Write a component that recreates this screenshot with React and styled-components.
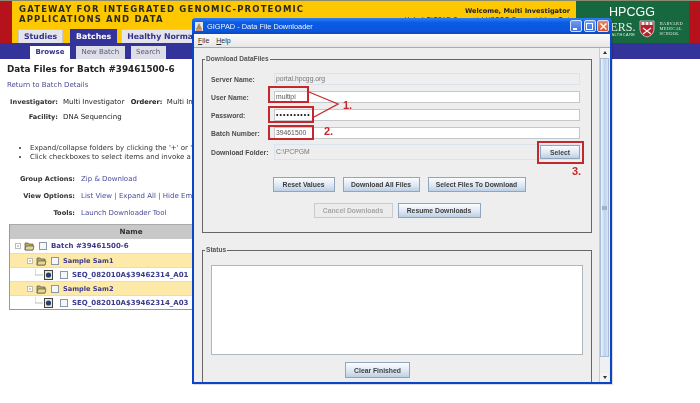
import React from 'react'
import styled, { createGlobalStyle } from 'styled-components'

const GlobalStyle = createGlobalStyle`
  html, body { margin: 0; padding: 0; background: #fff; }
  body { width: 700px; height: 403px; overflow: hidden; font-family: "DejaVu Sans", Verdana, sans-serif; color: #222; }
  #root { filter: blur(0.35px); }
`

const Page = styled.div`
  position: relative;
  width: 700px;
  height: 403px;
  overflow: hidden;
`

const Header = styled.header`
  display: flex;
  height: 43px;
  border-top: 1px solid #8a8a70;
  box-sizing: border-box;
`
const RedBar = styled.div`
  width: ${p => p.$w}px;
  background: #b5121b;
`
const Banner = styled.div`
  flex: 1;
  position: relative;
  background: #fdc800;
  display: flex;
  flex-direction: column;
  justify-content: space-between;
  padding: 3px 0 0 6px;
  overflow: hidden;
`
const BannerTitle = styled.div`
  margin-left: 1px;
  font-size: 8.5px;
  font-weight: bold;
  letter-spacing: 1.15px;
  line-height: 10px;
  color: #2a2a20;
  white-space: nowrap;
`
const Welcome = styled.div`
  position: absolute;
  right: 6px;
  top: 6px;
  font-size: 6.6px;
  line-height: 9px;
  text-align: right;
  color: #222;
  white-space: nowrap;
  b { display: block; font-size: 6.6px; }
`
const Tabs = styled.div`
  display: flex;
  gap: 4px;
`
const Tab = styled.div`
  height: 14px;
  padding: 0 5px;
  margin-right: ${p => p.$after || 0}px;
  font-size: 7.8px;
  font-weight: bold;
  line-height: 14px;
  color: ${p => (p.$active ? '#fff' : '#33338f')};
  background: ${p => (p.$active ? '#333399' : '#e4e4ea')};
  border: 1px solid #c9c9c9;
  border-bottom: 0;
  border-color: ${p => (p.$active ? '#333399' : '#c9c9c9')};
  box-sizing: border-box;
  white-space: nowrap;
`
const Partner = styled.div`
  width: 113px;
  background: #17683f;
  color: #fff;
  display: flex;
  flex-direction: column;
  align-items: center;
  overflow: hidden;
`
const PartnerName = styled.div`
  font-family: "Liberation Sans", Arial, sans-serif;
  font-size: 12.5px;
  line-height: 14px;
  margin-top: 4px;
  margin-left: -1px;
`
const PartnerRow = styled.div`
  display: flex;
  align-items: center;
  justify-content: flex-end;
  gap: 4px;
  width: 100%;
  padding-right: 6px;
  box-sizing: border-box;
  margin-top: 0;
`
const PartnerWord = styled.div`
  font-family: "Liberation Serif", serif;
  font-size: 12px;
  line-height: 11px;
  margin-top: 3px;
  text-align: right;
  white-space: nowrap;
  color: #e6efe9;
  small { display: block; font-family: "Liberation Sans", sans-serif; font-size: 3.8px; line-height: 5px; letter-spacing: 0.5px; }
`
const Harvard = styled.div`
  font-family: "Liberation Serif", serif;
  font-size: 4.4px;
  line-height: 5px;
  letter-spacing: 0.4px;
  color: #e6efe9;
`

const NavBar = styled.nav`
  display: flex;
  height: 16px;
  background: #333399;
  padding: 3px 0 0 30px;
  box-sizing: border-box;
  gap: 6px;
`
const SubTab = styled.div`
  height: 13px;
  padding: 0 5.5px;
  font-size: 7px;
  line-height: 13px;
  font-weight: ${p => (p.$active ? 'bold' : 'normal')};
  color: ${p => (p.$active ? '#33338a' : '#555580')};
  background: ${p => (p.$active ? '#fff' : '#dedee6')};
`

const Main = styled.main`
  padding: 4px 0 0 7px;
`
const Heading = styled.h1`
  margin: 0;
  font-size: 8.8px;
  line-height: 12px;
  font-weight: bold;
  color: #222;
  white-space: nowrap;
`
const BackLink = styled.div`
  margin-top: 5px;
  font-size: 7px;
  line-height: 10px;
  color: #4a4a9a;
`
const MetaTable = styled.div`
  display: grid;
  grid-template-columns: 51px 1fr;
  column-gap: 5px;
  row-gap: 5px;
  margin-top: 7px;
  font-size: 7px;
  line-height: 10px;
  white-space: nowrap;
  b { font-size: 6.6px; margin-left: 2px; }
`
const MetaLabel = styled.div`
  font-size: 6.6px;
  font-weight: bold;
  text-align: right;
  color: #333;
`
const Bullets = styled.ul`
  margin: 22px 0 0 0;
  padding: 0 0 0 23px;
  font-size: 7px;
  line-height: 9px;
  white-space: nowrap;
  color: #333;
`
const Actions = styled.div`
  display: grid;
  grid-template-columns: 68px 1fr;
  column-gap: 6px;
  row-gap: 7px;
  margin-top: 12px;
  font-size: 7px;
  line-height: 10px;
  white-space: nowrap;
`
const ActionLink = styled.div`
  color: #4a4a9a;
`

const TreeTable = styled.div`
  margin: 6px 0 0 2px;
  width: 500px;
  border: 1px solid #999;
  border-top-color: #aaa;
  box-sizing: border-box;
`
const TreeHead = styled.div`
  height: 14px;
  background: #c8c8c8;
  text-align: center;
  font-size: 7.2px;
  font-weight: bold;
  line-height: 13px;
  padding-right: 256px;
  color: #333;
`
const TreeRow = styled.div`
  display: flex;
  align-items: center;
  height: 14px;
  padding-left: ${p => p.$indent}px;
  background: ${p => (p.$band ? '#fde9a8' : '#fff')};
  border-top: ${p => (p.$line ? '1px solid #dcdcdc' : '0')};
  box-sizing: border-box;
  font-size: ${p => (p.$band ? 6.6 : 7)}px;
  font-weight: bold;
  color: #3b3b8e;
  white-space: nowrap;
`
const CheckBox = styled.span`
  width: 6px;
  height: 6px;
  border: 1px solid #8b97a5;
  background: #f4f6f8;
  margin: 0 4px 0 ${p => p.$gap}px;
  flex: none;
`

const FolderIcon = () => (
  <svg width="20" height="10" viewBox="0 0 20 10">
    <rect x="0.5" y="2.5" width="5" height="5" fill="#fff" stroke="#bbb" />
    <path d="M2 5h2" stroke="#999" />
    <path d="M10 2h3l1 1h4v6h-8z" fill="#b8a860" stroke="#555" strokeWidth="0.7" />
    <path d="M11 5h8l-1 4h-8z" fill="#e6d88a" stroke="#444" strokeWidth="0.6" />
  </svg>
)
const FileIcon = () => (
  <svg width="18" height="12" viewBox="0 0 18 12" style={{ flex: 'none' }}>
    <path d="M0 0v6h8" fill="none" stroke="#bbb" />
    <rect x="9.5" y="1.5" width="8" height="9" fill="#eee9c8" stroke="#444" />
    <circle cx="13.5" cy="6" r="2.6" fill="#1e3f7a" />
  </svg>
)

const Window = styled.section`
  position: absolute;
  left: 192px;
  top: 18px;
  width: 420px;
  height: 366px;
  box-sizing: border-box;
  border: 2px solid #0b44c8;
  border-top: 0;
  border-radius: 4px 4px 0 0;
  background: #eeeeee;
  display: flex;
  flex-direction: column;
  box-shadow: 1px 1px 1px rgba(0,0,0,0.15);
`
const TitleBar = styled.div`
  display: flex;
  align-items: center;
  height: 16px;
  margin: 0 -2px;
  padding: 0 3px 0 3px;
  flex: none;
  background: linear-gradient(#2f7df2, #0a5be4 30%, #0a56dc 80%, #0a48c0);
  border-radius: 4px 4px 0 0;
  color: #eef2fb;
  font-family: "Liberation Sans", Arial, sans-serif;
  font-size: 7.4px;
`
const AppIcon = styled.svg`
  margin-right: 4px;
  flex: none;
`
const TitleText = styled.div`
  flex: 1;
`
const WinButton = styled.div`
  width: 12px;
  height: 12px;
  box-sizing: border-box;
  margin-left: 1.5px;
  border: 1px solid #d6e2fa;
  border-radius: 2px;
  background: ${p => (p.$close ? 'linear-gradient(#ec8a6c,#d5502c)' : 'linear-gradient(#6f9bf2,#3c70e0)')};
  display: flex;
  align-items: center;
  justify-content: center;
`
const MenuBar = styled.div`
  display: flex;
  gap: 7px;
  height: 13px;
  flex: none;
  align-items: center;
  padding-left: 4px;
  background: linear-gradient(#fbfbfb, #e6e6e6);
  border-bottom: 1px solid #aaa;
  font-family: "Liberation Sans", Arial, sans-serif;
  font-size: 7px;
  color: #333;
  u { text-decoration: underline; }
`
const WinBody = styled.div`
  flex: 1;
  display: flex;
  min-height: 0;
`
const Content = styled.div`
  flex: 1;
  padding: 7px 7px 0 8px;
  display: flex;
  flex-direction: column;
  gap: 13px;
  min-width: 0;
  overflow: hidden;
`
const Group = styled.fieldset`
  margin: 0;
  padding: 0;
  border: 1px solid #666;
  border-radius: 0;
  height: ${p => p.$h}px;
  box-sizing: border-box;
  flex: none;
  min-width: 0;
  display: flex;
  flex-direction: column;
  font-family: "Liberation Sans", Arial, sans-serif;
`
const Legend = styled.legend`
  margin-left: 2px;
  padding: 0 1px;
  font-size: 6.6px;
  line-height: 8px;
  font-weight: bold;
  color: #555;
`
const FormGrid = styled.div`
  display: grid;
  grid-template-columns: 56px 1fr;
  column-gap: 7px;
  grid-auto-rows: 12px;
  row-gap: 6px;
  padding: 10px 11px 0 8px;
  align-items: center;
`
const FieldLabel = styled.div`
  font-size: 6.8px;
  font-weight: bold;
  color: #4c4c4c;
  white-space: nowrap;
`
const Field = styled.div`
  height: ${p => (p.$tall ? 16 : 12)}px;
  box-sizing: border-box;
  border: 1px solid ${p => (p.$readonly ? '#dbe3ec' : '#c4c8cc')};
  background: ${p => (p.$readonly ? '#eeeeee' : '#fff')};
  font-size: 6.8px;
  line-height: 10px;
  padding-left: 1px;
  color: ${p => (p.$readonly ? '#777' : '#555')};
  ${p => p.$strong && 'color:#111; font-weight:bold; letter-spacing:1.1px;'}
`
const FolderRow = styled.div`
  grid-column: 1 / -1;
  display: grid;
  grid-template-columns: 56px 1fr;
  column-gap: 7px;
  align-items: center;
  margin-top: 2px;
  height: 16px;
`
const FolderField = styled(Field)`
  display: flex;
  justify-content: space-between;
  align-items: center;
  padding-right: 0;
  border-right: 0;
  line-height: 14px;
`
const JavaButton = styled.button`
  height: ${p => p.$h}px;
  width: ${p => p.$w}px;
  box-sizing: border-box;
  margin: 0;
  padding: 0;
  border: 1px solid ${p => (p.disabled ? '#c8ccd0' : '#8fa6bd')};
  border-radius: 0;
  background: ${p => (p.disabled ? '#ececec' : 'linear-gradient(#fbfcfe, #dbe6f2 60%, #bccfe4)')};
  font-family: "Liberation Sans", Arial, sans-serif;
  font-size: 6.8px;
  font-weight: bold;
  color: ${p => (p.disabled ? '#a6a6a6' : '#3c3c3c')};
  white-space: nowrap;
`
const ButtonRow = styled.div`
  display: flex;
  justify-content: center;
  gap: ${p => p.$gap}px;
  margin-top: ${p => p.$top}px;
  margin-left: ${p => p.$shift}px;
`
const StatusArea = styled.div`
  margin: 11px 8px 0 8px;
  height: 90px;
  box-sizing: border-box;
  flex: none;
  background: #fff;
  border: 1px solid #aeb6be;
`
const ScrollBar = styled.div`
  width: 9px;
  flex: none;
  margin-right: 1px;
  display: flex;
  flex-direction: column;
  background: #eef0f2;
  border-left: 1px solid #c8ccd2;
`
const ScrollArrow = styled.div`
  height: 9px;
  flex: none;
  display: flex;
  align-items: center;
  justify-content: center;
  background: #f4f4f4;
  &::before {
    content: '';
    border-left: 2.5px solid transparent;
    border-right: 2.5px solid transparent;
    ${p => (p.$down ? 'border-top: 3px solid #333;' : 'border-bottom: 3px solid #333;')}
  }
`
const ScrollThumb = styled.div`
  flex: none;
  height: 299px;
  margin-top: 1px;
  box-sizing: border-box;
  border: 1px solid #a6bcd8;
  background: linear-gradient(90deg, #eef4fb, #bcd2ea 55%, #dbe7f4);
  display: flex;
  align-items: center;
  justify-content: center;
  &::before {
    content: '';
    width: 5px;
    height: 4px;
    background: #9fb2c8;
  }
`
const ScrollSpace = styled.div`
  flex: 1;
`

const Callout = styled.div`
  position: absolute;
  left: ${p => p.$x}px;
  top: ${p => p.$y}px;
  width: ${p => p.$w}px;
  height: ${p => p.$h}px;
  box-sizing: border-box;
  border: 2px solid #c4282c;
`
const CalloutNumber = styled.div`
  position: absolute;
  left: ${p => p.$x}px;
  top: ${p => p.$y}px;
  font-family: "Liberation Sans", Arial, sans-serif;
  font-size: 11px;
  line-height: 12px;
  font-weight: bold;
  color: #c4282c;
`
const CalloutLines = styled.svg`
  position: absolute;
  left: 305px;
  top: 88px;
`

const Shield = () => (
  <svg width="16" height="18" viewBox="0 0 16 18" style={{ flex: 'none' }}>
    <path d="M1 1h14v8c0 4-3 7-7 8-4-1-7-4-7-8z" fill="#b5202a" stroke="#eee" strokeWidth="0.7" />
    <rect x="2.5" y="2" width="3" height="3" fill="#eee" />
    <rect x="6.5" y="2" width="3" height="3" fill="#eee" />
    <rect x="10.5" y="2" width="3" height="3" fill="#eee" />
    <path d="M4 8l8 6M12 8l-8 6" stroke="#eee" strokeWidth="1.4" />
  </svg>
)

export default function App() {
  return (
    <Page>
      <GlobalStyle />
      <Header>
        <RedBar $w={12} />
        <Banner>
          <BannerTitle>
            GATEWAY FOR INTEGRATED GENOMIC-PROTEOMIC<br />APPLICATIONS AND DATA
          </BannerTitle>
          <Welcome>
            <b>Welcome, Multi Investigator</b>
            Help | GIGPAD Support | HPCGG Support | Log Out
          </Welcome>
          <Tabs>
            <Tab $after={3}>Studies</Tab>
            <Tab $active>Batches</Tab>
            <Tab>Healthy Normals</Tab>
          </Tabs>
        </Banner>
        <Partner>
          <PartnerName>HPCGG</PartnerName>
          <PartnerRow>
            <PartnerWord>PARTNERS.<small>HEALTHCARE</small></PartnerWord>
            <Shield />
            <Harvard>HARVARD<br />MEDICAL<br />SCHOOL</Harvard>
          </PartnerRow>
        </Partner>
        <RedBar $w={11} />
      </Header>
      <NavBar>
        <SubTab $active>Browse</SubTab>
        <SubTab>New Batch</SubTab>
        <SubTab>Search</SubTab>
      </NavBar>
      <Main>
        <Heading>Data Files for Batch #39461500-6</Heading>
        <BackLink>Return to Batch Details</BackLink>
        <MetaTable>
          <MetaLabel>Investigator:</MetaLabel>
          <div>Multi Investigator &nbsp;<b>Orderer:</b>&nbsp; Multi Investigator</div>
          <MetaLabel>Facility:</MetaLabel>
          <div>DNA Sequencing</div>
        </MetaTable>
        <Bullets>
          <li>Expand/collapse folders by clicking the '+' or '-' icons</li>
          <li>Click checkboxes to select items and invoke a group action</li>
        </Bullets>
        <Actions>
          <MetaLabel>Group Actions:</MetaLabel>
          <ActionLink>Zip &amp; Download</ActionLink>
          <MetaLabel>View Options:</MetaLabel>
          <ActionLink>List View | Expand All | Hide Empty</ActionLink>
          <MetaLabel>Tools:</MetaLabel>
          <ActionLink>Launch Downloader Tool</ActionLink>
        </Actions>
        <TreeTable>
          <TreeHead>Name</TreeHead>
          <TreeRow $indent={5}><FolderIcon /><CheckBox $gap={4} />Batch #39461500-6</TreeRow>
          <TreeRow $indent={17} $band $line><FolderIcon /><CheckBox $gap={4} />Sample Sam1</TreeRow>
          <TreeRow $indent={25} $line><FileIcon /><CheckBox $gap={7} />SEQ_082010A$39462314_A01</TreeRow>
          <TreeRow $indent={17} $band $line><FolderIcon /><CheckBox $gap={4} />Sample Sam2</TreeRow>
          <TreeRow $indent={25} $line><FileIcon /><CheckBox $gap={7} />SEQ_082010A$39462314_A03</TreeRow>
        </TreeTable>
      </Main>

      <Window>
        <TitleBar>
          <AppIcon width="8" height="9" viewBox="0 0 8 9">
            <rect width="8" height="9" fill="#dfe4ea" />
            <path d="M4 1l3 6H1z" fill="#b58a52" />
            <path d="M1 8h6" stroke="#c43" />
          </AppIcon>
          <TitleText>GIGPAD - Data File Downloader</TitleText>
          <WinButton>
            <svg width="7" height="7" viewBox="0 0 7 7"><rect x="0" y="5" width="4" height="2" fill="#fff" /></svg>
          </WinButton>
          <WinButton>
            <svg width="7" height="7" viewBox="0 0 7 7"><rect x="0.5" y="0.5" width="6" height="6" fill="none" stroke="#fff" /></svg>
          </WinButton>
          <WinButton $close>
            <svg width="7" height="7" viewBox="0 0 7 7"><path d="M0.5 0.5l6 6M6.5 0.5l-6 6" stroke="#fff" strokeWidth="1.4" /></svg>
          </WinButton>
        </TitleBar>
        <MenuBar>
          <span><u>F</u>ile</span>
          <span><u>H</u>elp</span>
        </MenuBar>
        <WinBody>
          <Content>
            <Group $h={178}>
              <Legend>Download DataFiles</Legend>
              <FormGrid>
                <FieldLabel>Server Name:</FieldLabel>
                <Field $readonly>portal.hpcgg.org</Field>
                <FieldLabel>User Name:</FieldLabel>
                <Field>multipi</Field>
                <FieldLabel>Password:</FieldLabel>
                <Field $strong>••••••••••</Field>
                <FieldLabel>Batch Number:</FieldLabel>
                <Field>39461500</Field>
                <FolderRow>
                  <FieldLabel>Download Folder:</FieldLabel>
                  <FolderField $readonly $tall>
                    C:\PCPGM
                    <JavaButton $w={40} $h={14}>Select</JavaButton>
                  </FolderField>
                </FolderRow>
              </FormGrid>
              <ButtonRow $gap={8} $top={20} $shift={4}>
                <JavaButton $w={62} $h={15}>Reset Values</JavaButton>
                <JavaButton $w={77} $h={15}>Download All Files</JavaButton>
                <JavaButton $w={98} $h={15}>Select Files To Download</JavaButton>
              </ButtonRow>
              <ButtonRow $gap={5} $top={11} $shift={0}>
                <JavaButton $w={79} $h={15} disabled>Cancel Downloads</JavaButton>
                <JavaButton $w={83} $h={15}>Resume Downloads</JavaButton>
              </ButtonRow>
            </Group>
            <Group $h={145}>
              <Legend>Status</Legend>
              <StatusArea />
              <ButtonRow $gap={0} $top={7} $shift={-39}>
                <JavaButton $w={65} $h={16}>Clear Finished</JavaButton>
              </ButtonRow>
            </Group>
          </Content>
          <ScrollBar>
            <ScrollArrow />
            <ScrollThumb />
            <ScrollSpace />
            <ScrollArrow $down />
          </ScrollBar>
        </WinBody>
      </Window>

      <Callout $x={268} $y={86} $w={41} $h={17} />
      <Callout $x={268} $y={106} $w={46} $h={17} />
      <Callout $x={268} $y={125} $w={46} $h={15} />
      <Callout $x={537} $y={141} $w={47} $h={23} />
      <CalloutLines width="40" height="34" viewBox="0 0 40 34">
        <path d="M4 4L33 16L9 29" fill="none" stroke="#c4282c" strokeWidth="1.3" />
      </CalloutLines>
      <CalloutNumber $x={343} $y={99}>1.</CalloutNumber>
      <CalloutNumber $x={324} $y={125}>2.</CalloutNumber>
      <CalloutNumber $x={572} $y={165}>3.</CalloutNumber>
    </Page>
  )
}
